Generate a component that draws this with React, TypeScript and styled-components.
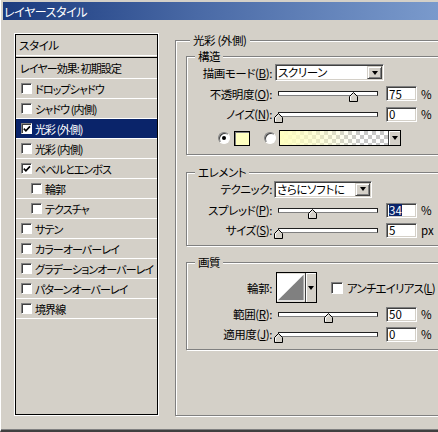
import styled, { createGlobalStyle } from 'styled-components'

const GlobalStyle = createGlobalStyle`
  html, body {
    margin: 0;
    padding: 0;
    background: #d4d0c8;
  }
  body {
    color: #000;
    font-family: 'Noto Sans CJK JP', 'Noto Sans', sans-serif;
    font-feature-settings: 'palt' 1;
    font-size: 11.5px;
    letter-spacing: -0.4px;
  }
`

type Effect = {
  label: string
  checked?: boolean
  selected?: boolean
  indent?: boolean
}

const effects: Effect[] = [
  { label: 'ドロップシャドウ' },
  { label: 'シャドウ (内側)' },
  { label: '光彩 (外側)', checked: true, selected: true },
  { label: '光彩 (内側)' },
  { label: 'ベベルとエンボス', checked: true },
  { label: '輪郭', indent: true },
  { label: 'テクスチャ', indent: true },
  { label: 'サテン' },
  { label: 'カラーオーバーレイ' },
  { label: 'グラデーションオーバーレイ' },
  { label: 'パターンオーバーレイ' },
  { label: '境界線' },
]

const Window = styled.div`
  background: #d4d0c8;
  border-bottom: 2px solid #404040;
  border-left: 1px solid #fff;
  box-shadow: inset 0 -1px 0 #808080;
  box-sizing: border-box;
  height: 432px;
  overflow: hidden;
  padding-top: 2px;
  width: 438px;
`

const TitleBar = styled.div`
  align-items: center;
  background: linear-gradient(90deg, #1a3a7e 0%, #4a6aa6 45%, #7a9acc 100%);
  color: #fff;
  display: flex;
  font-size: 12px;
  height: 18px;
  margin-left: 2px;
  padding-left: 1px;
`

const Body = styled.div`
  align-items: flex-start;
  display: flex;
  padding: 14px 0 0 14px;
`

const List = styled.div`
  border: 1px solid #000;
  box-shadow: 0 0 0 1px #fff;
  box-sizing: border-box;
  flex-shrink: 0;
  height: 381px;
  overflow: hidden;
  width: 143px;
`

const ListHeader = styled.div`
  align-items: center;
  display: flex;
  height: 20px;
  padding-left: 3px;
`

const HeaderRule = styled.div`
  border-bottom: 1px solid #000;
  border-top: 1px solid #fff;
  box-sizing: border-box;
  height: 3px;
`

const ListRow = styled.div<{ $selected?: boolean; $indent?: boolean; $h?: number; $pl?: number }>`
  align-items: center;
  background: ${({ $selected }) => ($selected ? '#0a246a' : 'transparent')};
  border-bottom: 1px solid #fff;
  box-sizing: border-box;
  color: ${({ $selected }) => ($selected ? '#fff' : '#000')};
  display: flex;
  font-size: 11px;
  gap: 3px;
  height: ${({ $h }) => $h ?? 20}px;
  letter-spacing: -0.9px;
  padding-left: ${({ $indent, $pl }) => $pl ?? ($indent ? 15 : 5)}px;
  white-space: nowrap;
`

const CheckBox = styled.span<{ $size?: number; $ml?: number }>`
  background: #fff;
  border-color: #808080 #fff #fff #808080;
  border-style: solid;
  border-width: 1px;
  box-shadow: inset 1px 1px 0 #404040;
  box-sizing: border-box;
  display: inline-flex;
  flex-shrink: 0;
  height: ${({ $size }) => $size ?? 11}px;
  margin-left: ${({ $ml }) => $ml ?? 0}px;
  width: ${({ $size }) => $size ?? 11}px;

  svg {
    margin: 1px 0 0 1px;
  }
`

const RightPanel = styled.div`
  border: 1px solid #808080;
  box-shadow: inset 1px 1px 0 #fff, 1px 1px 0 #fff;
  box-sizing: border-box;
  flex-shrink: 0;
  height: 376px;
  margin: 6px 0 0 17px;
  padding: 15px 0 0 10px;
  position: relative;
  width: 290px;
`

const Group = styled.div<{ $pt: number; $pb: number; $mt?: number }>`
  border: 1px solid #808080;
  box-shadow: inset 1px 1px 0 #fff, 1px 1px 0 #fff;
  margin-top: ${({ $mt }) => $mt ?? 0}px;
  padding: ${({ $pt, $pb }) => `${$pt}px 0 ${$pb}px 0`};
  position: relative;
  width: 300px;
`

const Legend = styled.span<{ $left: number }>`
  background: #d4d0c8;
  left: ${({ $left }) => $left}px;
  line-height: 14px;
  padding: 0 3px;
  position: absolute;
  top: -8px;
  white-space: nowrap;
`

const FormRow = styled.div<{ $h: number; $pl?: number }>`
  align-items: center;
  display: flex;
  height: ${({ $h }) => $h}px;
  padding-left: ${({ $pl }) => $pl ?? 0}px;
  white-space: nowrap;
`

const FieldLabel = styled.span`
  flex-shrink: 0;
  text-align: right;
  width: 85px;
`

const Sunken = styled.div<{ $w: number; $h: number; $ml: number }>`
  align-items: center;
  background: #fff;
  border-color: #808080 #fff #fff #808080;
  border-style: solid;
  border-width: 1px;
  box-shadow: inset 1px 1px 0 #404040, inset -1px -1px 0 #d4d0c8;
  box-sizing: border-box;
  display: flex;
  flex-shrink: 0;
  height: ${({ $h }) => $h}px;
  margin-left: ${({ $ml }) => $ml}px;
  padding: 0 1px 0 2px;
  width: ${({ $w }) => $w}px;
`

const ComboText = styled.span`
  flex: 1;
  line-height: 13px;
`

const DropButton = styled.span`
  align-items: center;
  background: #d4d0c8;
  border-color: #d4d0c8 #404040 #404040 #d4d0c8;
  border-style: solid;
  border-width: 1px;
  box-shadow: inset 1px 1px 0 #fff, inset -1px -1px 0 #808080;
  box-sizing: border-box;
  display: flex;
  height: 13px;
  justify-content: center;
  width: 15px;
`

const Arrow = styled.span`
  border-left: 3.5px solid transparent;
  border-right: 3.5px solid transparent;
  border-top: 4px solid #000;
  height: 0;
  width: 0;
`

const Track = styled.div`
  background: #fff;
  border: 1px solid #202020;
  border-bottom-color: #808080;
  box-sizing: border-box;
  flex-shrink: 0;
  height: 5px;
  margin-left: 6px;
  position: relative;
  width: 100px;
`

const Thumb = styled.svg`
  position: absolute;
  top: 0;
`

const NumberText = styled.span<{ $highlight?: boolean }>`
  background: ${({ $highlight }) => ($highlight ? '#0a246a' : 'transparent')};
  color: ${({ $highlight }) => ($highlight ? '#fff' : '#000')};
  letter-spacing: 0;
  line-height: 12px;
`

const Unit = styled.span`
  letter-spacing: 0;
  margin-left: 4px;
`

const Radio = styled.span<{ $checked?: boolean; $ml?: number }>`
  align-items: center;
  background: #fff;
  border-color: #808080 #fff #fff #808080;
  border-radius: 50%;
  border-style: solid;
  border-width: 1px;
  box-shadow: inset 1px 1px 0 #404040;
  box-sizing: border-box;
  display: flex;
  flex-shrink: 0;
  height: 12px;
  justify-content: center;
  margin-left: ${({ $ml }) => $ml ?? 0}px;
  width: 12px;

  &::after {
    background: #000;
    border-radius: 50%;
    content: '';
    display: ${({ $checked }) => ($checked ? 'block' : 'none')};
    height: 4px;
    width: 4px;
  }
`

const Swatch = styled.span`
  background: #ffffc0;
  border: 1px solid #000;
  box-shadow: inset 1px 1px 0 #808080;
  box-sizing: border-box;
  height: 15px;
  margin-left: 4px;
  width: 16px;
`

const GradientBox = styled.div`
  border: 1px solid #000;
  box-sizing: border-box;
  display: flex;
  height: 16px;
  margin-left: 3px;
  width: 122px;
`

const GradientFill = styled.span`
  background:
    linear-gradient(90deg, #ffffc0 0%, rgba(255, 255, 192, 0.6) 35%, rgba(255, 255, 192, 0) 75%),
    repeating-conic-gradient(#c8c8c8 0% 25%, #fff 0% 50%) 0 0 / 8px 8px;
  flex: 1;
`

const SmallDrop = styled.span`
  align-items: center;
  background: #d4d0c8;
  border-left: 1px solid #404040;
  box-shadow: inset 1px 1px 0 #fff;
  display: flex;
  justify-content: center;
  width: 11px;
`

const ContourBox = styled.div`
  border: 1px solid #000;
  box-sizing: border-box;
  display: flex;
  flex-shrink: 0;
  height: 31px;
  margin-left: 4px;
  width: 41px;
`

const ContourPreview = styled.svg`
  display: block;
`

const CheckLabel = styled.span`
  letter-spacing: -0.8px;
  margin-left: 4px;
`

const Check = () => (
  <svg width="8" height="8" viewBox="0 0 8 8">
    <path d="M0.8 3.6 L2.9 5.8 L7 1.4" fill="none" stroke="#000" strokeWidth="1.6" />
  </svg>
)

const Slider = ({ value }: { value: number }) => (
  <Track>
    <Thumb width="9" height="10" viewBox="0 0 9 10" style={{ left: `${value - 5.5}px` }}>
      <polygon points="4.5,0.5 8.5,4.5 8.5,9.5 0.5,9.5 0.5,4.5" fill="#d4d0c8" stroke="#000" />
      <polyline points="1.5,8.5 1.5,4.9 4.5,1.9" fill="none" stroke="#fff" />
    </Thumb>
  </Track>
)

const NumberField = ({ value, unit, highlight }: { value: string; unit: string; highlight?: boolean }) => (
  <>
    <Sunken $w={31} $h={15} $ml={8}>
      <NumberText $highlight={highlight}>{value}</NumberText>
    </Sunken>
    <Unit>{unit}</Unit>
  </>
)

const Combo = ({ text, width, ml }: { text: string; width: number; ml: number }) => (
  <Sunken $w={width} $h={17} $ml={ml}>
    <ComboText>{text}</ComboText>
    <DropButton>
      <Arrow />
    </DropButton>
  </Sunken>
)

const App = () => (
  <>
    <GlobalStyle />
    <Window>
      <TitleBar>レイヤースタイル</TitleBar>
      <Body>
        <List>
          <ListHeader>スタイル</ListHeader>
          <HeaderRule />
          <ListRow $h={21} $pl={4}>
            レイヤー効果: 初期設定
          </ListRow>
          {effects.map((effect) => (
            <ListRow key={effect.label} $selected={effect.selected} $indent={effect.indent}>
              <CheckBox>{effect.checked && <Check />}</CheckBox>
              {effect.label}
            </ListRow>
          ))}
        </List>

        <RightPanel>
          <Legend $left={14}>光彩 (外側)</Legend>

          <Group $pt={5} $pb={2}>
            <Legend $left={8}>構造</Legend>
            <FormRow $h={21}>
              <FieldLabel>
                描画モード(<u>B</u>):
              </FieldLabel>
              <Combo text="スクリーン" width={109} ml={3} />
            </FormRow>
            <FormRow $h={21}>
              <FieldLabel>
                不透明度(<u>O</u>):
              </FieldLabel>
              <Slider value={75} />
              <NumberField value="75" unit="%" />
            </FormRow>
            <FormRow $h={20}>
              <FieldLabel>
                ノイズ(<u>N</u>):
              </FieldLabel>
              <Slider value={0} />
              <NumberField value="0" unit="%" />
            </FormRow>
            <FormRow $h={28} $pl={31}>
              <Radio $checked />
              <Swatch />
              <Radio $ml={14} />
              <GradientBox>
                <GradientFill />
                <SmallDrop>
                  <Arrow />
                </SmallDrop>
              </GradientBox>
            </FormRow>
          </Group>

          <Group $pt={5} $pb={5} $mt={17}>
            <Legend $left={8}>エレメント</Legend>
            <FormRow $h={22}>
              <FieldLabel>テクニック:</FieldLabel>
              <Combo text="さらにソフトに" width={98} ml={2} />
            </FormRow>
            <FormRow $h={20}>
              <FieldLabel>
                スプレッド(<u>P</u>):
              </FieldLabel>
              <Slider value={34} />
              <NumberField value="34" unit="%" highlight />
            </FormRow>
            <FormRow $h={20}>
              <FieldLabel>
                サイズ(<u>S</u>):
              </FieldLabel>
              <Slider value={0} />
              <NumberField value="5" unit="px" />
            </FormRow>
          </Group>

          <Group $pt={7} $pb={4} $mt={16}>
            <Legend $left={8}>画質</Legend>
            <FormRow $h={35}>
              <FieldLabel>輪郭:</FieldLabel>
              <ContourBox>
                <ContourPreview width="29" height="29" viewBox="0 0 29 29">
                  <rect x="0" y="0" width="29" height="29" fill="#fff" />
                  <polygon points="1,28 28,1 28,28" fill="#808080" />
                </ContourPreview>
                <SmallDrop>
                  <Arrow />
                </SmallDrop>
              </ContourBox>
              <CheckBox $size={12} $ml={14} />
              <CheckLabel>
                アンチエイリアス(<u>L</u>)
              </CheckLabel>
            </FormRow>
            <FormRow $h={18}>
              <FieldLabel>
                範囲(<u>R</u>):
              </FieldLabel>
              <Slider value={50} />
              <NumberField value="50" unit="%" />
            </FormRow>
            <FormRow $h={22}>
              <FieldLabel>
                適用度(<u>J</u>):
              </FieldLabel>
              <Slider value={0} />
              <NumberField value="0" unit="%" />
            </FormRow>
          </Group>
        </RightPanel>
      </Body>
    </Window>
  </>
)

export default App
